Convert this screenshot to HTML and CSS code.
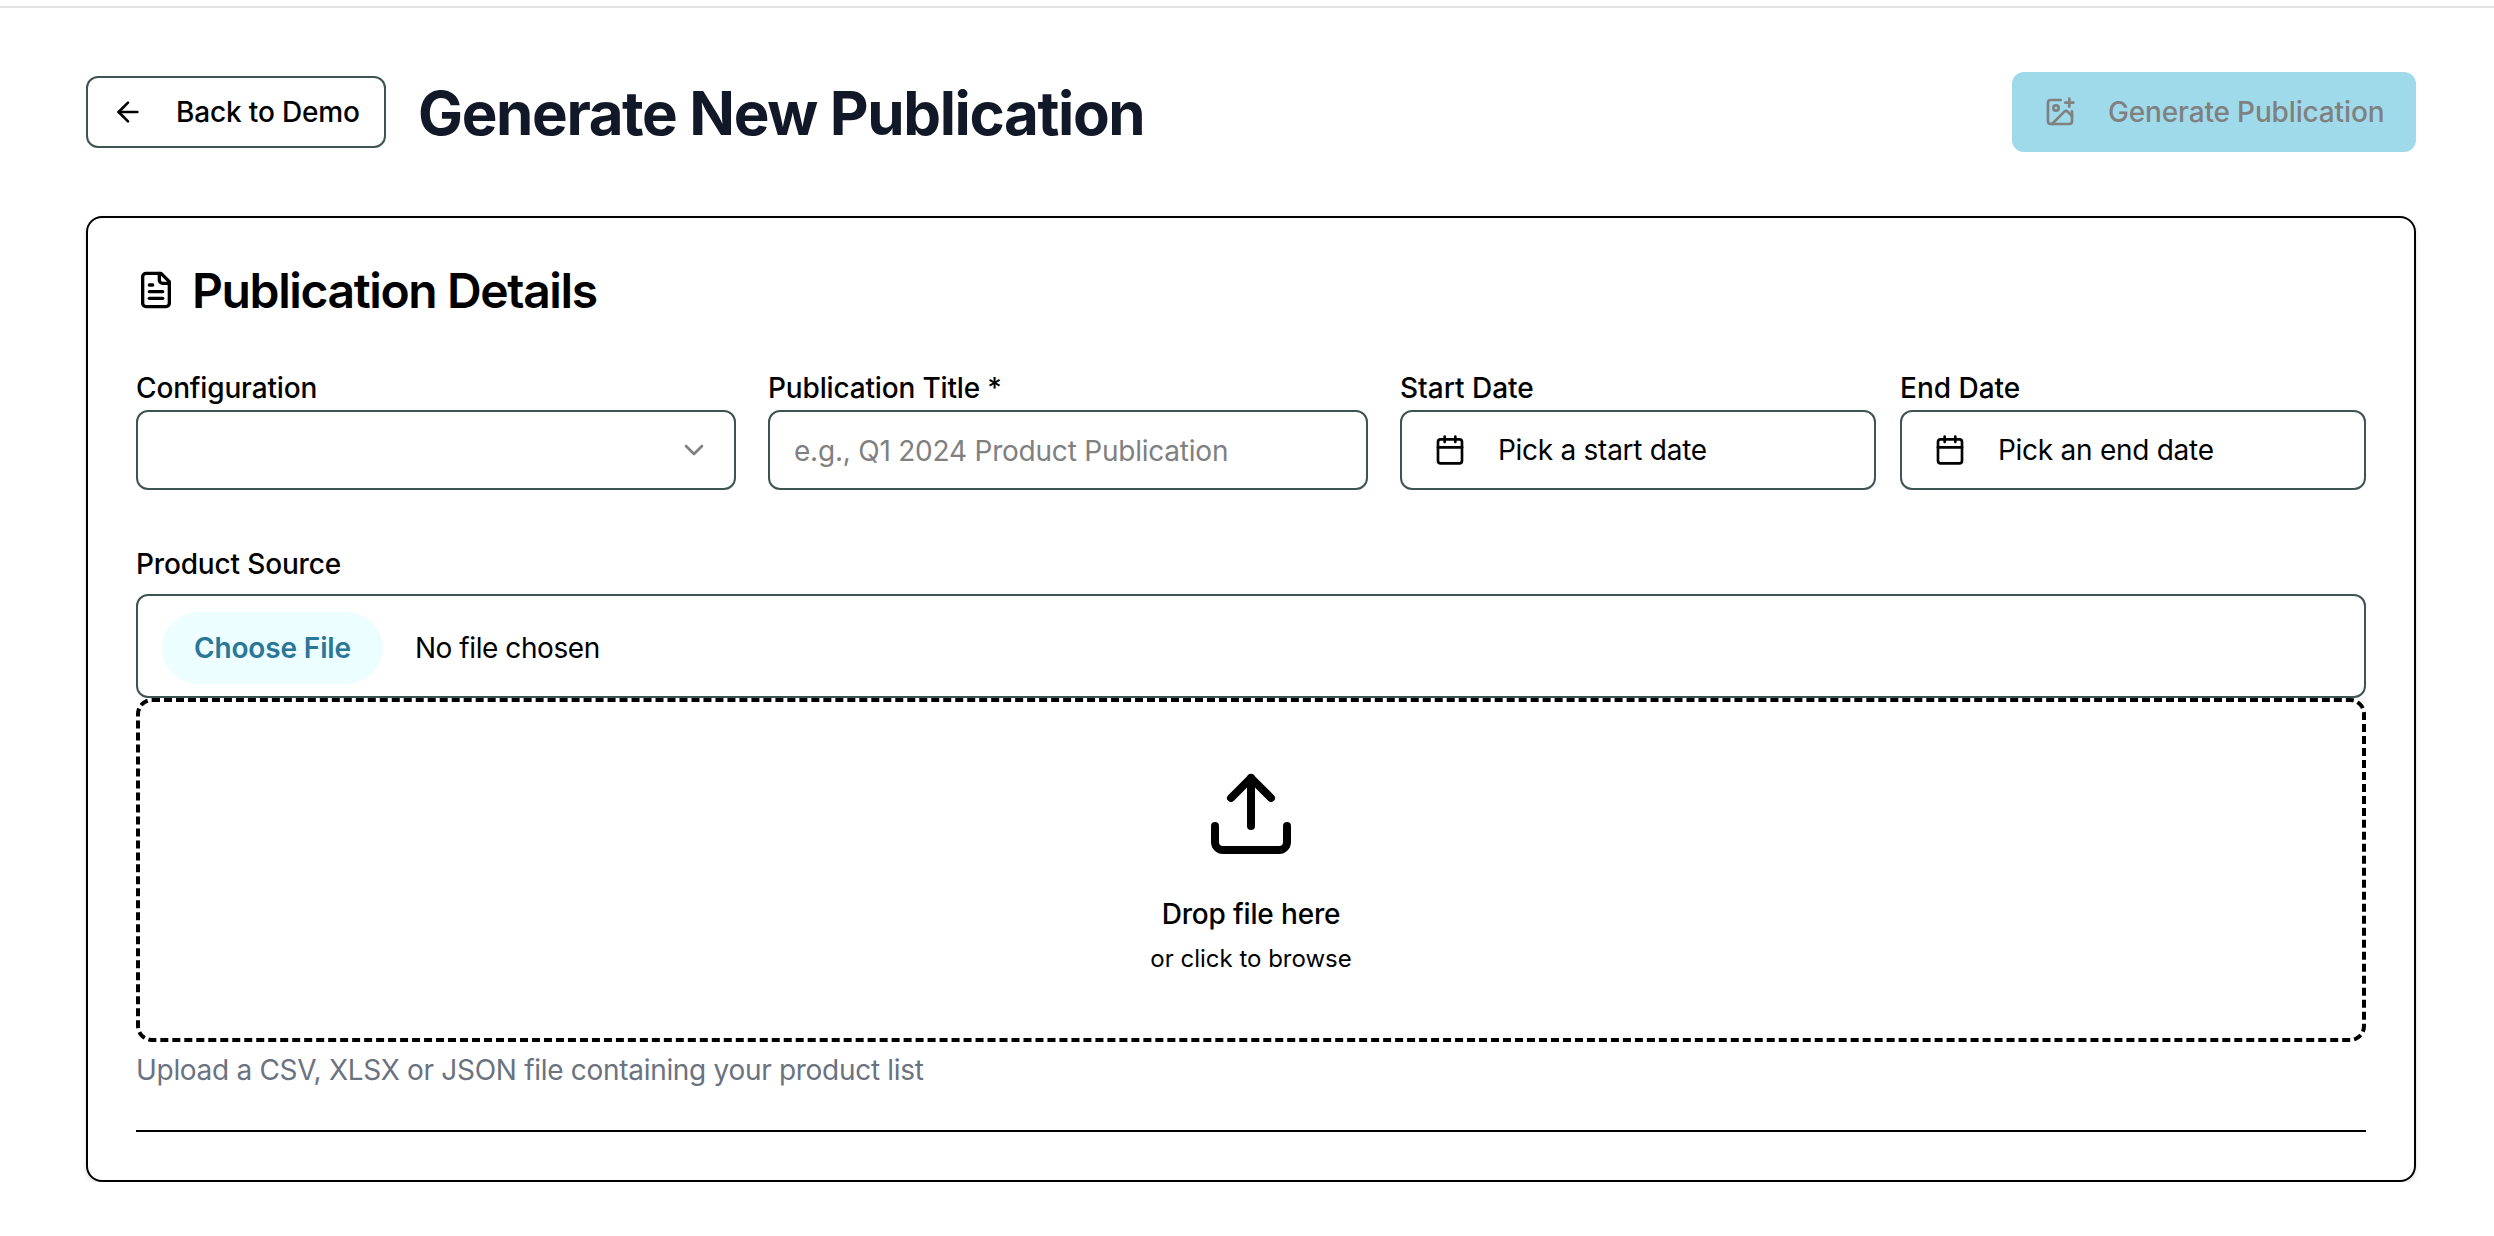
FILE: index.html
```html
<!DOCTYPE html>
<html lang="en">
<head>
<meta charset="utf-8">
<title>Generate New Publication</title>
<link rel="stylesheet" href="styles.css">
</head>
<body>
<div class="topbar"></div>
<main class="page">
  <header class="page-header">
    <button class="btn btn-outline" type="button">
      <svg class="icon" viewBox="0 0 24 24"><path d="m12 19-7-7 7-7"/><path d="M19 12H5"/></svg>
      <span>Back to Demo</span>
    </button>
    <h1 class="page-title">Generate New Publication</h1>
    <button class="btn btn-primary" type="button">
      <svg class="icon" viewBox="0 0 24 24"><path d="M16 5h6"/><path d="M19 2v6"/><path d="M21 11.5V19a2 2 0 0 1-2 2H5a2 2 0 0 1-2-2V5a2 2 0 0 1 2-2h7.5"/><path d="m21 15-3.086-3.086a2 2 0 0 0-2.828 0L6 21"/><circle cx="9" cy="9" r="2"/></svg>
      <span>Generate Publication</span>
    </button>
  </header>

  <section class="card">
    <h2 class="card-title">
      <svg class="icon icon-title" viewBox="0 0 24 24"><path d="M15 2H6a2 2 0 0 0-2 2v16a2 2 0 0 0 2 2h12a2 2 0 0 0 2-2V7Z"/><path d="M14 2v4a2 2 0 0 0 2 2h4"/><path d="M10 9H8"/><path d="M16 13H8"/><path d="M16 17H8"/></svg>
      <span class="card-title-text">Publication Details</span>
    </h2>

    <div class="fields">
      <div class="field">
        <span class="label">Configuration</span>
        <div class="control select">
          <svg class="icon icon-muted" viewBox="0 0 24 24"><path d="m6 9 6 6 6-6"/></svg>
        </div>
      </div>
      <div class="field">
        <span class="label">Publication Title *</span>
        <div class="control placeholder">e.g., Q1 2024 Product Publication</div>
      </div>
      <div class="dates">
        <div class="field">
          <span class="label label-date">Start Date</span>
          <div class="control date">
            <svg class="icon" viewBox="0 0 24 24"><path d="M8 2v4"/><path d="M16 2v4"/><rect width="18" height="18" x="3" y="4" rx="2"/><path d="M3 10h18"/></svg>
            <span>Pick a start date</span>
          </div>
        </div>
        <div class="field">
          <span class="label label-date">End Date</span>
          <div class="control date">
            <svg class="icon" viewBox="0 0 24 24"><path d="M8 2v4"/><path d="M16 2v4"/><rect width="18" height="18" x="3" y="4" rx="2"/><path d="M3 10h18"/></svg>
            <span>Pick an end date</span>
          </div>
        </div>
      </div>
    </div>

    <div class="source">
      <span class="label">Product Source</span>
      <div class="file-input">
        <span class="choose">Choose File</span>
        <span class="file-name">No file chosen</span>
      </div>
      <div class="dropzone">
        <svg class="icon icon-upload" viewBox="0 0 24 24"><path d="M12 3v12"/><path d="m17 8-5-5-5 5"/><path d="M21 15v4a2 2 0 0 1-2 2H5a2 2 0 0 1-2-2v-4"/></svg>
        <p class="drop-title">Drop file here</p>
        <p class="drop-hint">or click to browse</p>
      </div>
      <p class="help">Upload a CSV, XLSX or JSON file containing your product list</p>
    </div>
    <hr class="divider">
  </section>
</main>
</body>
</html>
```
FILE: styles.css
```css
* {
  box-sizing: border-box;
}

body {
  margin: 0;
  background: #fff;
  color: #000;
  font-family: Inter, "Liberation Sans", sans-serif;
  font-size: 28px;
  line-height: 40px;
  letter-spacing: -0.27px;
}

h1, h2, p {
  margin: 0;
}

.topbar {
  height: 8px;
  border-bottom: 2px solid #e2e2e2;
}

.page {
  padding: 64px 78px 0 86px;
}

.page-header {
  display: flex;
  align-items: center;
  height: 80px;
  margin-bottom: 64px;
}

.page-title {
  margin-left: 32px;
  padding-top: 2px;
  color: #111827;
  font-size: 60px;
  font-weight: 700;
  line-height: 72px;
  letter-spacing: -1.37px;
  white-space: nowrap;
}

.icon {
  width: 32px;
  height: 32px;
  flex: none;
  fill: none;
  stroke: currentColor;
  stroke-width: 2;
  stroke-linecap: round;
  stroke-linejoin: round;
}

.btn {
  display: flex;
  align-items: center;
  gap: 32px;
  border-radius: 12px;
  font: inherit;
  font-weight: 500;
  letter-spacing: -0.15px;
  white-space: nowrap;
}

.btn-outline {
  width: 300px;
  height: 72px;
  padding: 0 24px;
  border: 2px solid #3d5452;
  background: #fff;
  color: #000;
}

.btn-primary {
  width: 404px;
  height: 80px;
  margin-left: auto;
  padding: 0 32px;
  border: 0;
  background: #9fdaea;
  color: #808080;
}

.card {
  height: 966px;
  padding: 48px;
  border: 2px solid #000;
  border-radius: 16px;
  box-shadow: 0 2px 6px rgba(0, 0, 0, 0.1), 0 2px 4px -2px rgba(0, 0, 0, 0.1);
}

.card-title {
  display: flex;
  align-items: center;
  gap: 16px;
  height: 48px;
  font-size: 48px;
  font-weight: 600;
  line-height: 48px;
  letter-spacing: -1.38px;
}

.card-title-text {
  padding-top: 2px;
}

.icon-title {
  width: 40px;
  height: 40px;
}

.fields {
  display: grid;
  grid-template-columns: 600px 600px 1fr;
  gap: 32px;
  margin-top: 54px;
}

.dates {
  display: grid;
  grid-template-columns: 476px 1fr;
  gap: 24px;
}

.label {
  display: block;
  font-weight: 500;
  letter-spacing: -0.16px;
}

.label-date {
  letter-spacing: 0;
}

.control {
  display: flex;
  align-items: center;
  height: 80px;
  margin-top: 2px;
  border: 2px solid #3d5452;
  border-radius: 12px;
}

.select {
  justify-content: flex-end;
  padding: 0 24px;
}

.icon-muted {
  color: #808080;
}

.placeholder {
  padding: 2px 24px 0;
  color: #808080;
  letter-spacing: -0.22px;
}

.date {
  gap: 32px;
  padding: 0 32px;
}

.source {
  margin-top: 54px;
}

.file-input {
  display: flex;
  align-items: center;
  gap: 32px;
  height: 104px;
  margin-top: 10px;
  padding: 4px 24px 0;
  border: 2px solid #3d5452;
  border-radius: 12px;
}

.choose {
  padding: 16px 32px;
  border-radius: 36px;
  background: #ecfeff;
  color: #2b7797;
  font-weight: 600;
  letter-spacing: -0.15px;
}

.file-name {
  letter-spacing: -0.43px;
}

.dropzone {
  display: flex;
  flex-direction: column;
  align-items: center;
  height: 344px;
  padding-top: 64px;
  border: 4px dashed #000;
  border-radius: 16px;
}

.icon-upload {
  width: 96px;
  height: 96px;
}

.drop-title {
  margin-top: 32px;
  font-weight: 500;
  letter-spacing: -0.16px;
}

.drop-hint {
  margin-top: 9px;
  font-size: 24px;
  line-height: 32px;
  letter-spacing: 0;
}

.help {
  margin-top: 8px;
  color: #6b7280;
  letter-spacing: -0.3px;
}

.divider {
  height: 2px;
  margin: 40px 0 0;
  border: 0;
  background: #000;
}
```
